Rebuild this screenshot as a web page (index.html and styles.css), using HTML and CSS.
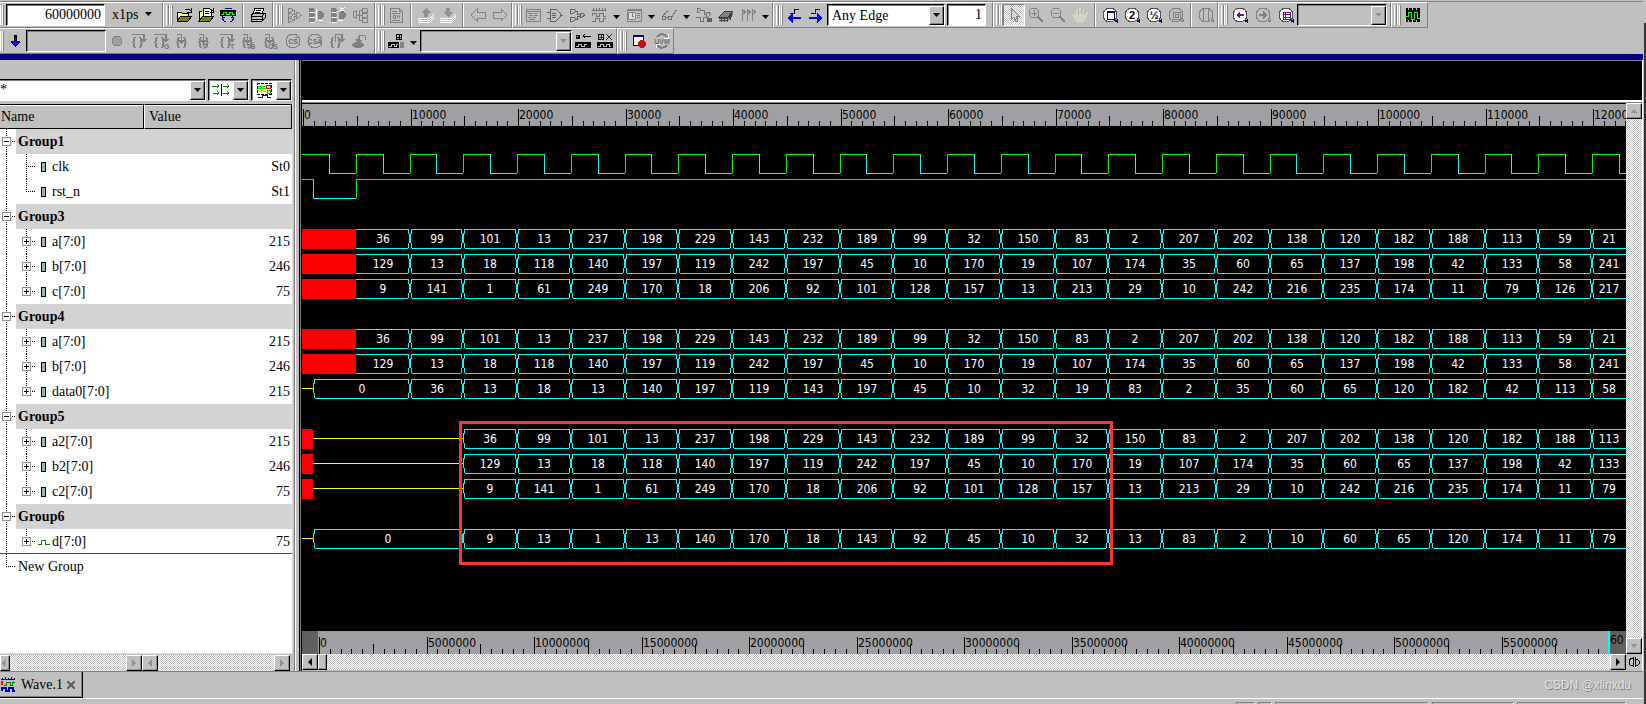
FILE: index.html
```
<!DOCTYPE html>
<html lang="en">
<head>
  <meta charset="UTF-8">
  <meta name="viewport" content="width=device-width, initial-scale=1.0">
  <title>Wave.1</title>
  <link rel="stylesheet" href="styles.css">
</head>
<body>
  <!-- icon sprite -->
  <svg class="sprite" aria-hidden="true">
    <symbol id="i-down" viewBox="0 0 16 16"><path d="M7 2h3v6h3v2h-1v1h-1v1h-1v1h-1v1H8v-1H7v-1H6v-1H5v-1H4V8h3z" fill="#000"/><path d="M8 3h1v10H8zM5 9h7v1H5zM6 10h5v1H6zM7 11h3v1H7z" fill="#00f"/></symbol>
    <symbol id="i-open" viewBox="0 0 16 16"><path d="M1 5h4l1 1h6v3H5l-4 5z" fill="#ffff80"/><path d="M5 9h11l-4 5H1z" fill="#808000"/><path d="M1 14V5h4l1 1h6v3M1 14l4-5h11l-4 5H1M9 3l1-1h3l2 2M15 1v4h-4" fill="none" stroke="#000"/></symbol>
    <symbol id="i-opendoc" viewBox="0 0 16 16"><path d="M1 4h4v10H1z" fill="#ffff80"/><path d="M5 1h6l2 2v6H5z" fill="#fff" stroke="#000"/><path d="M7 4h4M7 6h4" stroke="#000"/><path d="M5 9h11l-4 5H1z" fill="#808000" stroke="#000"/><path d="M1 14V4h3M13 2l2 2M15 1v4h-3" fill="none" stroke="#000"/></symbol>
    <symbol id="i-reload" viewBox="0 0 16 16"><path d="M0 3h16v6H0z" fill="#000"/><path d="M1 7h2V5h3v2h3V5h3v2h3" fill="none" stroke="#0f0"/><path d="M5 2l1-1h5l1 1M3 9l-1 2 2 3h2M12 9l2 2-2 3h-2M2 10l3 1M14 10l-3 1" fill="none" stroke="#0000a0"/></symbol>
    <symbol id="i-print" viewBox="0 0 16 16"><path d="M5 1h9l-2 6H3z" fill="#fff" stroke="#000"/><path d="M6 3h5M5 5h5" stroke="#000"/><path d="M1 8l3-2h11v5l-3 3H1z" fill="#c0c0c0" stroke="#000"/><path d="M1 9h11l3-3M1 12h11M12 9v5" fill="none" stroke="#000"/><path d="M8 10h2v1H8z" fill="#ff0"/></symbol>
    <symbol id="i-tree" viewBox="0 0 16 16"><path d="M2 1h2l2 1v2L4 5H2zM2 6h2l2 1v2l-2 1H2zM2 11h2l2 1v2l-2 1H2zM10 5h2l2 2v2l-2 2h-2zM6 3h2v4h2M6 13h2V9h2M14 8h2" fill="none" stroke="#808080"/></symbol>
    <symbol id="i-treefill" viewBox="0 0 16 16"><path d="M1 1h4l2 1v2L5 5H1zM1 6h4l2 1v2l-2 1H1zM1 11h4l2 1v2l-2 1H1zM10 4h3l3 3v2l-3 3h-3z" fill="#808080"/><path d="M8 2v12M2 5h4M2 10h4M2 15h4M11 13h4" stroke="#fff" fill="none"/></symbol>
    <symbol id="i-treecut" viewBox="0 0 16 16"><path d="M1 1h4l2 1v2L5 5H1zM1 6h4l2 1v2l-2 1H1zM1 11h4l2 1v2l-2 1H1zM9 4h4l3 3v2l-3 3H9z" fill="#808080"/><path d="M2 5h4M2 10h4M2 15h4M8 13h5M9 0l6 5M15 0L9 5" stroke="#fff" fill="none"/></symbol>
    <symbol id="i-treerev" viewBox="0 0 16 16"><path d="M1 5l3-1v7l-3-1zM10 1h3l2 1v3h-5zM10 6h3l2 1v3h-5zM10 11h3l2 1v3h-5zM4 8h6M7 3h3M7 13h3M7 3v10" fill="none" stroke="#808080"/></symbol>
    <symbol id="i-page" viewBox="0 0 16 16"><path d="M2 1h9l3 3v11H2zM11 1v3h3M4 4h5M4 6h8M4 13h8M5 8h2v3H5zM9 8v3M11 8v3" fill="none" stroke="#808080"/></symbol>
    <symbol id="i-up" viewBox="0 0 16 16"><path d="M8 1l5 5h-3v4H6V6H3z" fill="#909090"/><path d="M0 11h12l4-4M0 13h12l4-4M0 15h12l4-4" fill="none" stroke="#fff"/></symbol>
    <symbol id="i-dn" viewBox="0 0 16 16"><path d="M8 10l5-5h-3V1H6v4H3z" fill="#909090"/><path d="M0 11h12l4-4M0 13h12l4-4M0 15h12l4-4" fill="none" stroke="#fff"/></symbol>
    <symbol id="i-back" viewBox="0 0 16 16"><path d="M1 8l6-6v3h8v6H7v3z" fill="none" stroke="#808080"/></symbol>
    <symbol id="i-fwd" viewBox="0 0 16 16"><path d="M15 8L9 2v3H1v6h8v3z" fill="none" stroke="#808080"/></symbol>
    <symbol id="i-src" viewBox="0 0 16 16"><path d="M1 2h14v12H1zM1 4h14M3 6h5M9 6h3M4 8h4M9 8h4M3 10h3M7 10h4M4 12h6" fill="none" stroke="#808080"/></symbol>
    <symbol id="i-gate" viewBox="0 0 16 16"><path d="M3 2h6l4 4v4l-4 4H3zM0 5h3M0 11h3M13 8h3M5 6h4M5 8h4M5 10h4" fill="none" stroke="#606060"/></symbol>
    <symbol id="i-gates" viewBox="0 0 16 16"><path d="M1 2h3l2 1v2L4 6H1zM1 10h3l2 1v2l-2 1H1zM11 6h2l2 1v2l-2 1h-2zM6 4h2v3h3M6 12h2V9h3M14 8h2" fill="none" stroke="#606060"/></symbol>
    <symbol id="i-wave" viewBox="0 0 16 16"><path d="M1 3h14M2 1v2M5 1v2M8 1v2M11 1v2M14 1v2M1 9V6h4v3h3V6h4v3h3M1 14h3v-3h4v3h4v-3h3" fill="none" stroke="#707070"/></symbol>
    <symbol id="i-clock" viewBox="0 0 16 16"><path d="M1 2h14v12H1zM1 3h14M11 6h3M11 8h3M11 10h3" fill="none" stroke="#808080"/><circle cx="6" cy="9" r="4" fill="#ddd" stroke="#808080"/><path d="M6 6v3h2" fill="none" stroke="#808080"/></symbol>
    <symbol id="i-glass" viewBox="0 0 16 16"><circle cx="3" cy="11" r="2" fill="none" stroke="#707070"/><circle cx="9" cy="11" r="2" fill="none" stroke="#707070"/><path d="M1 10l5-6h2M5 10h2M11 10l4-7h1v2" fill="none" stroke="#707070"/></symbol>
    <symbol id="i-mix" viewBox="0 0 16 16"><path d="M1 1h2l2 2-2 2H1zM5 3h3v4h3M10 5h2l3 2-3 3h-2zM0 10h4v4h3v-4h4v4" fill="none" stroke="#707070"/><path d="M11 11h5v4h-5z" fill="#606060"/></symbol>
    <symbol id="i-mem" viewBox="0 0 16 16"><path d="M1 10l6-6h8l-5 6z" fill="#808080" stroke="#404040"/><path d="M1 11h9l5-6M1 13h9l5-6M3 12v3M6 12v3M9 12v3M12 9v4" fill="none" stroke="#404040"/></symbol>
    <symbol id="i-flags" viewBox="0 0 16 16"><path d="M2 14V2l4 3-4 3M7 14V2l4 3-4 3M12 14V2l4 3-4 3M2 4h2M7 4h2" fill="none" stroke="#808080"/></symbol>
    <symbol id="i-prev" viewBox="0 0 16 16"><path d="M4 6h4V2h5" fill="none" stroke="#000"/><path d="M1 11l6-5v4h8v2H7v4z" fill="#00f"/></symbol>
    <symbol id="i-next" viewBox="0 0 16 16"><path d="M3 6h4V2h5" fill="none" stroke="#000"/><path d="M15 11L9 6v4H1v2h8v4z" fill="#00f"/></symbol>
    <symbol id="i-cursor" viewBox="0 0 16 16"><path d="M5 1v12l3-3 2 5 2-1-2-5h3z" fill="#d8d8d8" stroke="#808080"/></symbol>
    <symbol id="i-zin" viewBox="0 0 16 16"><circle cx="6" cy="6" r="5" fill="none" stroke="#808080"/><path d="M3 6h6M6 3v6" stroke="#808080"/><path d="M10 10l5 5" stroke="#808080" stroke-width="2"/></symbol>
    <symbol id="i-zout" viewBox="0 0 16 16"><circle cx="6" cy="6" r="5" fill="none" stroke="#808080"/><path d="M3 6h6" stroke="#808080"/><path d="M10 10l5 5" stroke="#808080" stroke-width="2"/></symbol>
    <symbol id="i-hand" viewBox="0 0 16 16"><path d="M4 15L0 8l2-1 2 2V3l2-1 1 5V1h2l1 6 1-5 2 1v5l1-3h2l-1 5-3 5z" fill="#d8d4cc"/><path d="M6 4v4M9 2v5M12 4v4" stroke="#b0aca4"/></symbol>
    <symbol id="i-lens" viewBox="0 0 16 16"><path d="M12 14l4 2v-4z" fill="#000080"/><circle cx="8" cy="8" r="7" fill="#fff" stroke="#505050"/></symbol>
    <symbol id="i-lensoff" viewBox="0 0 16 16"><path d="M12 15h4v-4z" fill="#808080"/><circle cx="8" cy="8" r="7" fill="none" stroke="#808080"/></symbol>
    <symbol id="i-zall" viewBox="0 0 16 16"><use href="#i-lens"/><path d="M5 4h7v8H5z" fill="#fff" stroke="#000080"/><path d="M5 4h7v2H5z" fill="#000080"/></symbol>
    <symbol id="i-zarea" viewBox="0 0 16 16"><use href="#i-lensoff"/><path d="M5 5h7v7H5zM7 7h3v3H7z" fill="none" stroke="#808080"/></symbol>
    <symbol id="i-zcur" viewBox="0 0 16 16"><use href="#i-lensoff"/><path d="M5 2v12M10 2v12" stroke="#808080"/></symbol>
    <symbol id="i-zback" viewBox="0 0 16 16"><use href="#i-lens"/><path d="M4 8l4-4v3h4v2H8v3z" fill="#60109a"/></symbol>
    <symbol id="i-zfwd" viewBox="0 0 16 16"><use href="#i-lensoff"/><path d="M12 8L8 4v3H4v2h4v3z" fill="#808080"/></symbol>
    <symbol id="i-zlist" viewBox="0 0 16 16"><use href="#i-lens"/><path d="M5 5h7v7H5zM5 7h7M5 10h7M7 5v7" fill="none" stroke="#60109a"/></symbol>
    <symbol id="i-film" viewBox="0 0 16 16"><path d="M1 1h14v14H1z" fill="#000"/><path d="M1 9h2V5h3v7h3V5h3v6h3" fill="none" stroke="#0f0"/><path d="M3 1h1v2H3zM7 1h1v2H7zM11 1h1v2h-1zM3 13h1v2H3zM7 13h1v2H7zM11 13h1v2h-1z" fill="#c0c0c0"/></symbol>
    <symbol id="i-stop" viewBox="0 0 16 16"><circle cx="8" cy="8" r="5" fill="#a0a0a0" stroke="#808080"/></symbol>
    <symbol id="i-brace" viewBox="0 0 16 16"><path d="M3 4h2v1H4v4H3v1h1v4h1v1H3v-1H2v-4H1V9h1V5h1zM8 4h2v1h1v4h1v1h-1v4h-1v1H8v-1h1v-4h1V9H9V5H8z" fill="#808080"/></symbol>
    <symbol id="i-over" viewBox="0 0 16 16"><use href="#i-brace"/><path d="M1 1h12v1H1zM12 1h2v5h2v1h-1v1h-1v1h-2V8h-1V7h-1V6h2z" fill="#808080"/></symbol>
    <symbol id="i-into" viewBox="0 0 16 16"><use href="#i-brace"/><path d="M2 1h5v1H2zM6 1h1v6h3v1H9v1H8v1H7v1H6v-1H5V9H4V8H3V7h3z" fill="#808080"/></symbol>
    <symbol id="i-out" viewBox="0 0 16 16"><use href="#i-brace"/><path d="M6 1h8v5h2v1h-1v1h-1v1h-2V8h-1V7h-1V6h2V2H7v7H6z" fill="#808080"/></symbol>
    <symbol id="i-round" viewBox="0 0 16 16"><circle cx="8" cy="8" r="7" fill="none" stroke="#808080"/><path d="M11 1l3 3h-4" fill="none" stroke="#808080"/></symbol>
    <symbol id="i-eject" viewBox="0 0 16 16"><ellipse cx="7" cy="12" rx="6" ry="3" fill="#808080"/><path d="M4 6h2l1 1V3l1-1h5l2 2v3h-1V4l-1-1H9v4h2v1h-1v1H6V8H5z" fill="#808080"/></symbol>
    <symbol id="i-probe" viewBox="0 0 16 16"><circle cx="11" cy="4" r="3" fill="none" stroke="#000"/><path d="M8 4h6M11 1v6" stroke="#000"/><path d="M0 9h11v6H0z" fill="#000"/><path d="M1 13h2v-2h3v2h2v-2h2" fill="none" stroke="#c0c0c0"/><path d="M12 9h4v6h-4z" fill="#808080"/></symbol>
    <symbol id="i-probein" viewBox="0 0 16 16"><circle cx="3" cy="4" r="2" fill="none" stroke="#000"/><path d="M1 4h4M3 2v4M16 7V3H8M10 1L8 3l2 2" fill="none" stroke="#000"/><path d="M0 9h16v6H0z" fill="#000"/><path d="M1 13h2v-2h3v2h3v-2h3" fill="none" stroke="#c0c0c0"/></symbol>
    <symbol id="i-probedel" viewBox="0 0 16 16"><circle cx="4" cy="4" r="3" fill="none" stroke="#000"/><path d="M1 4h6M4 1v6M9 1l6 6M15 1L9 7" stroke="#303030"/><path d="M0 9h16v6H0z" fill="#000"/><path d="M1 13h2v-2h3v2h3v-2h3v2h2" fill="none" stroke="#c0c0c0"/></symbol>
    <symbol id="i-rec" viewBox="0 0 16 16"><path d="M2 2h10v10H2z" fill="#fff" stroke="#000"/><path d="M2 2h10v2H2z" fill="#00a"/><circle cx="11" cy="11" r="4" fill="#c8101c"/></symbol>
    <symbol id="i-uvm" viewBox="0 0 16 16"><path d="M3 4a6 6 0 0 1 10 0M13 12a6 6 0 0 1-10 0" fill="none" stroke="#808080" stroke-width="2"/><path d="M14 1v4h-4M2 15v-4h4" fill="none" stroke="#fff"/></symbol>
    <symbol id="i-match" viewBox="0 0 18 16"><path d="M0 4h7M5 2l2 2-2 2M1 11h6M5 9l2 2-2 2M11 4h6M15 2l2 2-2 2M11 11h6M15 9l2 2-2 2" fill="none" stroke="#008000"/><path d="M9 2v12" stroke="#000"/></symbol>
    <symbol id="i-color" viewBox="0 0 16 16"><path d="M1 1h14v11H1z" fill="#fff" stroke="#000" stroke-dasharray="3 1"/><path d="M2 4h8M2 6h8M5 3v4" stroke="#0f0"/><path d="M10 3h4v3h-4z" fill="none" stroke="red"/><path d="M2 9h8" stroke="#ee0" stroke-width="2"/><path d="M11 8h3v3h-3z" fill="none" stroke="#0c0"/><path d="M2 15h4v-2h5v2h4" fill="none" stroke="#00f"/></symbol>
    <symbol id="i-tab" viewBox="0 0 16 16"><path d="M1 2h14M2 1v1M5 0v2M8 1v1M11 0v2M14 1v1" stroke="#000080" fill="none"/><path d="M1 4h2v4H1z" fill="red"/><path d="M4 8h2V5h4v3h2V5h3" fill="none" stroke="#008000"/><path d="M2 14v-3h4v3h3v-3h4v3h2" fill="none" stroke="#0000c0" stroke-width="2"/></symbol>
    <symbol id="i-sig" viewBox="0 0 12 10"><path d="M0 7h3V3h4v4h5" fill="none" stroke="#008000"/></symbol>
    <symbol id="i-sync" viewBox="0 0 12 12"><path d="M5 3L3 2 1 5v3l2 2 2-1zM7 3h2l2 2v3l-2 2-2-1zM5 1v10M7 1v10" fill="none" stroke="#000"/></symbol>
  </svg>

  <div class="toolbars">
    <div class="bar-row">
      <div class="bar bar-first">
        <i class="grip"></i>
        <input class="field time" type="text" value="60000000" aria-label="Time">
        <button class="unit">x1ps <i class="tri"></i></button>
      </div>
      <div class="bar pad">
        <i class="grip"></i>
        <button class="tool" title="Open"><svg><use href="#i-open"/></svg></button>
        <button class="tool" title="Open file"><svg><use href="#i-opendoc"/></svg></button>
        <button class="tool" title="Reload"><svg><use href="#i-reload"/></svg></button>
        <i class="sep"></i>
        <button class="tool" title="Print"><svg><use href="#i-print"/></svg></button>
      </div>
      <div class="bar pad">
        <i class="grip"></i>
        <button class="tool"><svg><use href="#i-tree"/></svg></button>
        <button class="tool"><svg><use href="#i-treefill"/></svg></button>
        <button class="tool"><svg><use href="#i-treecut"/></svg></button>
        <button class="tool"><svg><use href="#i-treerev"/></svg></button>
      </div>
      <div class="bar">
        <i class="grip"></i>
        <button class="tool"><svg><use href="#i-page"/></svg></button>
        <i class="sep"></i>
        <button class="tool"><svg><use href="#i-up"/></svg></button>
        <button class="tool"><svg><use href="#i-dn"/></svg></button>
        <i class="sep"></i>
        <button class="tool"><svg><use href="#i-back"/></svg></button>
        <button class="tool"><svg><use href="#i-fwd"/></svg></button>
      </div>
      <div class="bar">
        <i class="grip"></i>
        <button class="tool"><svg><use href="#i-src"/></svg></button>
        <button class="tool"><svg><use href="#i-gate"/></svg></button>
        <button class="tool"><svg><use href="#i-gates"/></svg></button>
        <button class="tool"><svg><use href="#i-wave"/></svg></button>
        <button class="drop"><i class="tri"></i></button>
        <button class="tool"><svg><use href="#i-clock"/></svg></button>
        <button class="drop"><i class="tri"></i></button>
        <button class="tool"><svg><use href="#i-glass"/></svg></button>
        <button class="drop"><i class="tri"></i></button>
        <button class="tool"><svg><use href="#i-mix"/></svg></button>
        <button class="tool"><svg><use href="#i-mem"/></svg></button>
        <button class="tool"><svg><use href="#i-flags"/></svg></button>
        <button class="drop"><i class="tri"></i></button>
      </div>
      <div class="bar pad">
        <i class="grip"></i>
        <button class="tool"><svg><use href="#i-prev"/></svg></button>
        <button class="tool"><svg><use href="#i-next"/></svg></button>
        <span class="combo edge">
          <select aria-label="Search by"><option>Any Edge</option><option>Rising Edge</option><option>Falling Edge</option></select>
          <span class="arrow"><i class="tri"></i></span>
        </span>
        <input class="field count" type="text" value="1" aria-label="Count">
      </div>
      <div class="bar">
        <i class="grip"></i>
        <button class="tool pressed"><svg><use href="#i-cursor"/></svg></button>
        <button class="tool"><svg><use href="#i-zin"/></svg></button>
        <button class="tool"><svg><use href="#i-zout"/></svg></button>
        <button class="tool"><svg><use href="#i-hand"/></svg></button>
        <i class="sep"></i>
        <button class="tool"><svg><use href="#i-zall"/></svg></button>
        <button class="tool"><svg><use href="#i-lens"/><text x="8" y="12" class="ico-text" text-anchor="middle">2</text></svg></button>
        <button class="tool"><svg><use href="#i-lens"/><text x="8" y="12" class="ico-text" text-anchor="middle">½</text></svg></button>
        <button class="tool"><svg><use href="#i-zarea"/></svg></button>
        <i class="sep"></i>
        <button class="tool"><svg><use href="#i-zcur"/></svg></button>
      </div>
      <div class="bar pad">
        <i class="grip"></i>
        <button class="tool wide"><svg><use href="#i-zback"/></svg></button>
        <button class="tool wide"><svg><use href="#i-zfwd"/></svg></button>
        <button class="tool wide"><svg><use href="#i-zlist"/></svg></button>
        <span class="combo mark off">
          <select disabled aria-label="Zoom history"></select>
          <span class="arrow"><i class="tri"></i></span>
        </span>
      </div>
      <div class="bar pad">
        <i class="grip"></i>
        <button class="tool wide"><svg><use href="#i-film"/></svg></button>
      </div>
    </div>

    <div class="bar-row">
      <div class="bar bar-second">
        <i class="grip"></i>
        <button class="tool"><svg><use href="#i-down"/></svg></button>
        <input class="field step" type="text" disabled aria-label="Step">
        <button class="tool"><svg><use href="#i-stop"/></svg></button>
        <button class="tool"><svg><use href="#i-over"/></svg></button>
        <button class="tool"><svg><use href="#i-over"/><text x="11" y="16" class="ico-gray">G</text></svg></button>
        <button class="tool"><svg><use href="#i-into"/></svg></button>
        <button class="tool"><svg><use href="#i-into"/><text x="5" y="16" class="ico-gray">T</text></svg></button>
        <button class="tool"><svg><use href="#i-over"/><text x="11" y="16" class="ico-gray">T</text></svg></button>
        <button class="tool"><svg><use href="#i-into"/><text x="5" y="16" class="ico-gray">TB</text></svg></button>
        <button class="tool"><svg><use href="#i-into"/><text x="5" y="16" class="ico-gray">CS</text></svg></button>
        <button class="tool"><svg><use href="#i-round"/><text x="8" y="11" class="ico-gray" text-anchor="middle">CS</text></svg></button>
        <button class="tool"><svg><use href="#i-round"/><text x="8" y="11" class="ico-gray" text-anchor="middle">CSA</text></svg></button>
        <button class="tool"><svg><use href="#i-out"/></svg></button>
        <button class="tool"><svg><use href="#i-eject"/></svg></button>
      </div>
      <div class="bar">
        <i class="grip"></i>
        <button class="tool"><svg><use href="#i-probe"/></svg></button>
        <button class="drop"><i class="tri"></i></button>
        <span class="combo probe off">
          <select disabled aria-label="Probe"></select>
          <span class="arrow"><i class="tri"></i></span>
        </span>
        <button class="tool"><svg><use href="#i-probein"/></svg></button>
        <button class="tool"><svg><use href="#i-probedel"/></svg></button>
      </div>
      <div class="bar">
        <i class="grip"></i>
        <button class="tool wide"><svg><use href="#i-rec"/></svg></button>
        <button class="tool wide"><svg><use href="#i-uvm"/><text x="8" y="11" class="ico-gray" text-anchor="middle">UVM</text></svg></button>
      </div>
    </div>
  </div>

  <div class="title-strip"></div>

  <div class="workspace">
    <div class="signals">
      <div class="filter">
        <span class="combo pattern">
          <input type="text" value="*" aria-label="Filter">
          <button class="arrow"><i class="tri"></i></button>
        </span>
        <span class="combo small">
          <svg class="pic"><use href="#i-match"/></svg>
          <button class="arrow"><i class="tri"></i></button>
        </span>
        <span class="combo small">
          <svg class="pic"><use href="#i-color"/></svg>
          <button class="arrow"><i class="tri"></i></button>
        </span>
      </div>
      <div class="list">
        <table>
          <thead><tr><th class="th-name">Name</th><th>Value</th></tr></thead>
          <tbody id="rows"></tbody>
        </table>
      </div>
      <div class="list-scroll">
        <div class="hscroll name-scroll"><button class="sb sb-cut off"><i class="tri left"></i></button><span></span><button class="sb off"><i class="tri right"></i></button></div>
        <div class="hscroll value-scroll"><button class="sb off"><i class="tri left"></i></button><span></span><button class="sb off"><i class="tri right"></i></button></div>
      </div>
    </div>
    <div class="splitter"></div>
    <div class="viewer">
      <div class="marker-area"></div>
      <div class="plot">
        <div class="plot-main">
          <svg class="ruler" id="ruler"></svg>
          <div class="waves" id="waves">
            <div class="mark-box"></div>
          </div>
          <div class="overview">
            <span class="cap"></span>
            <svg class="ruler" id="full"></svg>
            <span class="cap cap-end">60</span>
          </div>
          <div class="hscroll"><button class="sb"><i class="tri left"></i></button><button class="thumb" aria-label="Scroll"></button><span></span><button class="sb"><i class="tri right"></i></button></div>
        </div>
        <div class="vscroll">
          <button class="sb off"><i class="tri up"></i></button>
          <span></span>
          <button class="sb off"><i class="tri"></i></button>
          <button class="sync"><svg><use href="#i-sync"/></svg></button>
        </div>
      </div>
    </div>
  </div>

  <div class="tabs">
    <div class="tab"><svg><use href="#i-tab"/></svg><a href="#">Wave.1</a><button class="close" aria-label="Close"></button></div>
    <span class="credit">CSDN @xlinxdu</span>
  </div>
  <div class="status"><i class="s1"></i><i class="s2"></i><i class="s3"></i><i class="s4"></i><i class="s5"></i></div>

  <script src="wave.js"></script>
</body>
</html>
```
FILE: styles.css
```
* {
  box-sizing: border-box;
}
body, html {
  margin: 0;
  padding: 0;
  height: 100%;
}
body {
  display: flex;
  flex-direction: column;
  padding-right: 3px;
  background: linear-gradient(#333, #333) 100% 23px / 2px 100% no-repeat #c0c0c0;
  font-family: "Liberation Serif", serif;
  font-size: 14px;
  color: #000;
  overflow: hidden;
}
button, input, select {
  margin: 0;
  padding: 0;
  border: none;
  border-radius: 0;
  outline: none;
  background: none;
  font: inherit;
  color: inherit;
}
a {
  color: inherit;
  text-decoration: none;
}
svg {
  display: block;
  width: 16px;
  height: 16px;
  shape-rendering: crispEdges;
}
.sprite {
  display: none;
}
svg text {
  font-family: "DejaVu Sans Condensed", "DejaVu Sans", sans-serif;
  font-size: 12px;
}
svg .ico-text {
  font: bold 11px "Liberation Sans", sans-serif;
}
svg .ico-gray {
  font: bold 7px "Liberation Sans", sans-serif;
  fill: #707070;
}

/* arrows */
.tri {
  display: inline-block;
  width: 7px;
  height: 4px;
  background: #000;
  clip-path: polygon(0 0, 100% 0, 50% 100%);
}
.tri.up {
  clip-path: polygon(0 100%, 100% 100%, 50% 0);
}
.tri.left, .tri.right {
  width: 4px;
  height: 8px;
  clip-path: polygon(100% 0, 100% 100%, 0 50%);
}
.tri.right {
  clip-path: polygon(0 0, 0 100%, 100% 50%);
}
.off .tri {
  background: #909090;
}

/* toolbars */
.toolbars {
  border-top: 1px solid #808080;
  margin-top: 1px;
}
.bar-row {
  display: flex;
  height: 26px;
}
.bar {
  display: flex;
  align-items: center;
  flex: none;
  border: 1px solid;
  border-color: #fff #808080 #808080 #fff;
}
.bar.pad {
  padding-right: 3px;
}
.grip {
  flex: none;
  width: 6px;
  height: 20px;
  margin: 0 1px 0 2px;
  border: solid #fff;
  border-width: 0 1px;
  background: linear-gradient(90deg, #c0c0c0 1px, #808080 1px 2px, #fff 2px 3px, #c0c0c0 3px);
  box-shadow: 1px 0 #808080;
}
.bar-first, .bar-second {
  border-left: none;
}
.bar-first {
  width: 163px;
}
.bar-second {
  padding-right: 4px;
}
.bar-first .grip, .bar-second .grip {
  width: 3px;
  margin: 0 3px 0 0;
}
.bar-second .grip {
  margin: 0 1px 0 0;
}
.tool {
  display: flex;
  align-items: center;
  justify-content: center;
  width: 22px;
  height: 22px;
}
.tool.wide {
  width: 23px;
}
.tool svg {
  overflow: visible;
}
.tool.pressed {
  border: 1px solid;
  border-color: #808080 #fff #fff #808080;
  background: repeating-conic-gradient(#c0c0c0 0 25%, #fff 0 50%) 0 0 / 2px 2px;
}
.drop {
  width: 13px;
  line-height: 10px;
}
.sep {
  width: 2px;
  height: 24px;
  margin: 0 3px;
  background: linear-gradient(90deg, #808080 1px, #fff 1px);
}
.unit {
  margin-left: 7px;
  white-space: nowrap;
}
.unit .tri {
  margin: 0 0 3px 3px;
}
.field, .combo {
  height: 22px;
  border: 1px solid;
  border-color: #000 #fff #fff #000;
  background: #fff;
  box-shadow: inset 1px 1px #808080;
}
.field {
  padding: 0 3px;
  text-align: right;
}
.time {
  width: 99px;
}
.count {
  width: 39px;
  margin: 0 3px 0 2px;
}
.step {
  width: 80px;
  background: #c0c0c0;
}
.combo {
  display: flex;
  align-items: center;
}
.combo select {
  flex: 1;
  min-width: 0;
  padding-left: 4px;
  appearance: none;
  opacity: 1;
}
.combo input {
  flex: 1;
  min-width: 0;
}
.combo.off {
  background: #c0c0c0;
}
.arrow {
  display: flex;
  flex: none;
  align-items: center;
  justify-content: center;
  width: 15px;
  height: 19px;
  border: 1px solid;
  border-color: #fff #000 #000 #fff;
  background: #c0c0c0;
  box-shadow: inset -1px -1px #808080;
  pointer-events: none;
}
.edge {
  width: 118px;
}
.mark {
  width: 90px;
}
.probe {
  width: 152px;
}

.title-strip {
  height: 6px;
  flex: none;
  background: #000080;
  border-bottom: 1px solid #00006a;
}

/* workspace */
.workspace {
  display: flex;
  flex: 1;
  min-height: 0;
  border-bottom: 1px solid #808080;
}
.signals {
  display: flex;
  flex-direction: column;
  flex: none;
  width: 294px;
}
.filter {
  display: flex;
  gap: 2px;
  margin: 19px 2px 3px 0;
}
.pattern {
  flex: 1;
  border-left: none;
  box-shadow: inset 0 1px #808080;
}
.small {
  width: 41px;
}
.pic {
  width: 18px;
  flex: 1;
}
.list {
  flex: 1;
  border-right: 1px solid #dfdfdf;
  border-bottom: 1px solid #dfdfdf;
  margin-right: 1px;
  background: #fff;
}
table {
  width: 100%;
  border-spacing: 0;
  table-layout: fixed;
}
th {
  height: 25px;
  padding: 0 4px;
  border: 1px solid;
  border-color: #000 #000 #000 #fff;
  background: #c0c0c0;
  box-shadow: inset 0 1px #fff;
  font-weight: normal;
  text-align: left;
}
.th-name {
  width: 144px;
  padding-left: 1px;
  border-left: none;
}
td {
  height: 25px;
  padding: 0;
}
td.value {
  padding-right: 2px;
  text-align: right;
}
.name {
  display: flex;
  align-items: center;
  height: 25px;
}
.label {
  padding-left: 2px;
}
.group .label {
  flex: 1;
  height: 25px;
  background: #d3d3d3;
  font-weight: bold;
  line-height: 25px;
}
.insert td {
  background: linear-gradient(#f00, #f00) 0 100% / 100% 1px no-repeat;
}
/* dotted tree lines */
.trunk, .branch {
  flex: none;
  height: 25px;
  background: repeating-linear-gradient(#000 0 1px, transparent 1px 2px) 6px 0 / 1px 25px no-repeat;
}
.trunk {
  width: 16px;
  padding: 8px 0 0 2px;
}
.branch {
  width: 25px;
  padding: 8px 0 0 6px;
}
.group .trunk, .new .trunk, .branch {
  background-image: repeating-linear-gradient(#000 0 1px, transparent 1px 2px), repeating-linear-gradient(90deg, #000 0 1px, transparent 1px 2px);
  background-position: 6px 0, 6px 12px;
  background-size: 1px 25px, 9px 1px;
  background-repeat: no-repeat;
}
.branch {
  background-position: 10px 0, 10px 12px;
}
.last .branch, .new .trunk {
  background-size: 1px 13px, 9px 1px;
}
.toggle {
  display: block;
  width: 9px;
  height: 9px;
  border: 1px solid #909090;
  background: linear-gradient(#000, #000) 1px 3px / 5px 1px no-repeat #fff;
}
.toggle.plus {
  background: linear-gradient(#000, #000) 1px 3px / 5px 1px no-repeat, linear-gradient(#000, #000) 3px 1px / 1px 5px no-repeat #fff;
}
.kind {
  width: 5px;
  height: 10px;
  margin-right: 6px;
  border: 1px solid #000;
  background: #9db8a8;
}
.kind-d {
  width: 12px;
  height: 10px;
  margin: 0 2px 0 -3px;
}

/* scrollbars */
.list-scroll {
  display: flex;
  margin: 1px 4px 0 0;
}
.name-scroll {
  width: 142px;
}
.value-scroll {
  flex: 1;
}
.hscroll {
  display: flex;
  height: 16px;
}
.hscroll span, .vscroll span {
  flex: 1;
  background: repeating-conic-gradient(#c0c0c0 0 25%, #fff 0 50%) 0 0 / 2px 2px;
}
.sb, .thumb {
  display: flex;
  flex: none;
  align-items: center;
  justify-content: center;
  width: 16px;
  height: 16px;
  border: 1px solid;
  border-color: #fff #000 #000 #fff;
  background: #c0c0c0;
  box-shadow: inset -1px -1px #909090;
}
.sb-cut {
  width: 10px;
  padding-right: 3px;
}
.thumb {
  width: 9px;
}
.vscroll {
  display: flex;
  flex-direction: column;
  width: 16px;
}
.sync {
  height: 16px;
}
.sync svg {
  width: 12px;
  height: 12px;
  margin: auto;
}

.splitter {
  flex: none;
  width: 8px;
  background: linear-gradient(90deg, #808080 1px, #fff 1px 2px, #c0c0c0 2px 5px, #000 5px 6px, #808080 6px 7px, #000 7px);
}
.viewer {
  display: flex;
  flex-direction: column;
  flex: 1;
  min-width: 0;
  border-top: 1px solid #808080;
  border-right: 1px solid #fff;
}
.marker-area {
  flex: none;
  height: 41px;
  background: #000;
  border-bottom: 2px solid #fff;
  box-shadow: 0 1px #808080;
}
.plot {
  display: flex;
  flex: 1;
  min-height: 0;
  padding: 1px 0 1px;
}
.plot-main {
  display: flex;
  flex-direction: column;
  flex: 1;
  min-width: 0;
  border-top: 1px solid #000;
}
.ruler {
  flex: none;
  width: 100%;
  height: 22px;
  background: #a0a0a4;
}
.waves {
  position: relative;
  flex: 1;
  min-height: 0;
  padding-top: 2px;
  background: #000;
  overflow: hidden;
}
.waves svg {
  width: 100%;
  height: 25px;
  fill: none;
}
.waves text {
  fill: #fff;
}
.hi {
  stroke: #0f0;
}
.lo, .bus {
  stroke: #0ff;
}
.z {
  stroke: #ff0;
}
.x {
  fill: #f00;
}
/* highlighted time range, drawn over the traces */
.mark-box {
  position: absolute;
  top: 295px;
  left: 157px;
  width: 654px;
  height: 144px;
  border: 3px solid #f33;
}
.overview {
  display: flex;
  flex: none;
  height: 23px;
  background: #606060;
}
.overview .ruler {
  flex: 1;
  width: auto;
  min-width: 0;
  height: 23px;
}
.cap {
  width: 16px;
}
.cap-end {
  width: 18px;
  padding-top: 2px;
  border-left: 2px solid #0ff;
  font: 12px "DejaVu Sans Condensed", "DejaVu Sans", sans-serif;
}

/* bottom */
.tabs {
  display: flex;
  flex: none;
  align-items: center;
  justify-content: space-between;
  height: 26px;
}
.tab {
  display: flex;
  align-items: center;
  height: 26px;
  padding-right: 7px;
  border: solid #000;
  border-width: 0 1px 1px 0;
  box-shadow: inset -1px -1px #808080;
}
.tab a {
  margin: 0 4px 0 5px;
}
.close {
  width: 8px;
  height: 8px;
  background: linear-gradient(45deg, transparent 43%, #606060 43% 57%, transparent 57%), linear-gradient(-45deg, transparent 43%, #606060 43% 57%, transparent 57%);
}
.credit {
  padding-right: 12px;
  font: 12px "Liberation Sans", sans-serif;
  color: #e0e0e0;
  text-shadow: 1px 1px #808080;
}
.status {
  display: flex;
  flex: none;
  justify-content: flex-end;
  gap: 3px;
  height: 6px;
  padding: 3px 17px 0 0;
  border-top: 1px solid #fff;
}
.status i {
  border: 1px solid;
  border-color: #808080 #fff #fff #808080;
  border-bottom: none;
}
.s1 {
  width: 19px;
}
.s2 {
  width: 14px;
}
.s3 {
  width: 154px;
}
.s4 {
  width: 82px;
}
.s5 {
  width: 109px;
}
```
FILE: wave.js
```
const a = [36, 99, 101, 13, 237, 198, 229, 143, 232, 189, 99, 32, 150, 83, 2, 207, 202, 138, 120, 182, 188, 113, 59, 21]
const b = [129, 13, 18, 118, 140, 197, 119, 242, 197, 45, 10, 170, 19, 107, 174, 35, 60, 65, 137, 198, 42, 133, 58, 241]
const c = [9, 141, 1, 61, 249, 170, 18, 206, 92, 101, 128, 157, 13, 213, 29, 10, 242, 216, 235, 174, 11, 79, 126, 217]
const data0 = [36, 13, 18, 13, 140, 197, 119, 143, 197, 45, 10, 32, 19, 83, 2, 35, 60, 65, 120, 182, 42, 113, 58]
const d = [9, 13, 1, 13, 140, 170, 18, 143, 92, 45, 10, 32, 13, 83, 2, 10, 60, 65, 120, 174, 11, 79]

const STEP = 5000
// x: unknown until, z: floating until, zero: shows 0 until the first value
const signals = [
  { group: 'Group1' },
  { name: 'clk', value: 'St0', clock: true },
  { name: 'rst_n', value: 'St1', reset: true, last: true },
  { group: 'Group3' },
  { name: 'a[7:0]', value: 215, x: 5000, start: 5000, bus: a },
  { name: 'b[7:0]', value: 246, x: 5000, start: 5000, bus: b },
  { name: 'c[7:0]', value: 75, x: 5000, start: 5000, bus: c, last: true },
  { group: 'Group4' },
  { name: 'a[7:0]', value: 215, x: 5000, start: 5000, bus: a },
  { name: 'b[7:0]', value: 246, x: 5000, start: 5000, bus: b },
  { name: 'data0[7:0]', value: 215, z: 1000, zero: true, start: 10000, bus: data0, last: true },
  { group: 'Group5' },
  { name: 'a2[7:0]', value: 215, x: 1000, z: 15000, start: 15000, bus: a.slice(0, 22) },
  { name: 'b2[7:0]', value: 246, x: 1000, z: 15000, start: 15000, bus: b.slice(0, 22) },
  { name: 'c2[7:0]', value: 75, x: 1000, z: 15000, start: 15000, bus: c.slice(0, 22), last: true },
  { group: 'Group6' },
  { name: 'd[7:0]', value: 75, z: 1000, zero: true, start: 15000, bus: d, last: true, insert: true }
]

const HIGH = 1
const MID = 10
const LOW = 20
const px = t => Math.round(t * 215 / 20000)

// left list
function row(s) {
  if (s.group) {
    return `<tr class="group"><td colspan="2"><div class="name"><span class="trunk"><button class="toggle" aria-label="Collapse"></button></span><span class="label">${s.group}</span></div></td></tr>`
  }
  const cls = (s.last ? 'last ' : '') + (s.insert ? 'insert' : '')
  const toggle = s.bus ? '<button class="toggle plus" aria-label="Expand"></button>' : ''
  const kind = s.insert ? '<svg class="kind-d"><use href="#i-sig"/></svg>' : '<i class="kind"></i>'
  return `<tr class="${cls}"><td><div class="name"><span class="trunk"></span><span class="branch">${toggle}</span>${kind}<span>${s.name}</span></div></td><td class="value">${s.value}</td></tr>`
}
document.querySelector('#rows').innerHTML = signals.map(row).join('') +
  '<tr class="new"><td colspan="2"><div class="name"><span class="trunk"></span><span class="label">New Group</span></div></td></tr>'

// right side
function cell(x0, x1, text, flat, width) {
  const end = Math.min(x1, width)
  const left = flat ? `M${x0} ${HIGH}` : `M${x0} ${MID}L${x0 + 2} ${HIGH}`
  const back = flat ? `H${x0}` : `H${x0 + 2}L${x0} ${MID}`
  return `<path class="bus" d="${left}H${x1 - 2}L${x1} ${MID}L${x1 - 2} ${LOW}${back}"/>` +
    `<text x="${Math.round((x0 + end) / 2)}" y="15" text-anchor="middle">${text}</text>`
}

function trace(s, width) {
  let out = ''
  if (s.clock) {
    let hi = ''
    let lo = ''
    for (let t = 0; px(t) < width; t += STEP) {
      const x = px(t)
      const m = px(t + STEP / 2)
      const e = px(t + STEP)
      hi += t ? `M${x} ${LOW}V${HIGH}H${m}` : `M${x} ${HIGH}H${m}`
      lo += `M${m} ${HIGH}V${LOW}H${e}`
    }
    return `<path class="lo" d="${lo}"/><path class="hi" d="${hi}"/>`
  }
  if (s.reset) {
    return `<path class="lo" d="M${px(1000)} ${HIGH}V${LOW}H${px(5000)}"/>` +
      `<path class="hi" d="M0 ${HIGH}H${px(1000)}M${px(5000)} ${LOW}V${HIGH}H${width}"/>`
  }
  if (s.x) out += `<rect class="x" x="0" y="${HIGH}" width="${px(s.x)}" height="20"/>`
  if (s.z) out += `<path class="z" d="M${s.x ? px(s.x) : 0} ${MID}H${px(s.z)}"/>`
  if (s.zero) out += cell(px(s.z), px(s.start), 0, false, width)
  s.bus.forEach((v, i) => {
    const t = s.start + i * STEP
    out += cell(px(t), px(t + STEP), v, s.x === t, width)
  })
  return out
}

function ruler(el, step, pos, count, height) {
  let ticks = ''
  let labels = ''
  for (let i = 0; i < count * 10; i++) {
    const x = Math.round(pos(i / 10)) + 1
    const h = i % 10 === 0 ? 17 : i % 5 === 0 ? 10 : 5
    ticks += `M${x} ${height - h}V${height}`
    if (i % 10 === 0) labels += `<text x="${x + 1}" y="${height - 7}">${i / 10 * step}</text>`
  }
  el.innerHTML = `<path d="${ticks}" stroke="#000"/>${labels}`
}

function draw() {
  const waves = document.querySelector('#waves')
  const width = waves.clientWidth
  waves.querySelectorAll('svg').forEach(el => el.remove())
  waves.insertAdjacentHTML('afterbegin', signals.map(s => `<svg>${s.group ? '' : trace(s, width)}</svg>`).join(''))
  ruler(document.querySelector('#ruler'), 10000, n => px(n * 10000), Math.ceil(width / px(10000)), 22)
  const full = document.querySelector('#full')
  const w = full.getBoundingClientRect().width
  ruler(full, 5000000, n => n * w / 12, 12, 23)
}

draw()
window.addEventListener('resize', draw)
```
